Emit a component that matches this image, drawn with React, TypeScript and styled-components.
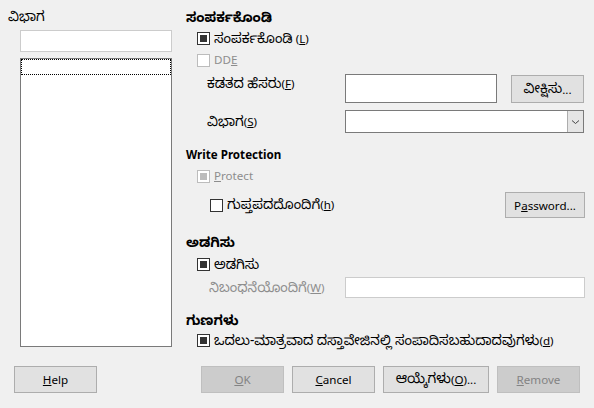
import React from "react";
import styled, { createGlobalStyle } from "styled-components";

const Global = createGlobalStyle`
  html, body { margin: 0; padding: 0; background: #f0f0f0; }
  body { font-family: "Noto Sans", "Noto Sans Kannada", "Open Sans", sans-serif; font-size: 11.6px; color: #000; }
`;

const Dialog = styled.div`
  width: 594px;
  height: 408px;
  background: #f0f0f0;
  display: flex;
  flex-direction: column;
  box-sizing: border-box;
  overflow: hidden;
`;

const Main = styled.div`
  display: flex;
  padding-left: 8px;
  height: 366px;
`;

const LeftCol = styled.div`
  width: 164px;
  display: flex;
  flex-direction: column;
  padding-top: 8px;
`;

const RightCol = styled.div`
  margin-left: 14px;
  width: 399px;
  display: flex;
  flex-direction: column;
`;

const Kn = styled.span`
  font-size: 13.5px;
`;

const Label = styled.div<{ $top?: number }>`
  height: 16px;
  line-height: 16px;
  white-space: nowrap;
  margin-top: ${(p) => p.$top ?? 0}px;
`;

const Header = styled(Label)`
  font-weight: bold;
`;

const Entry = styled.div<{ $w: number; $h: number; $dark?: boolean }>`
  width: ${(p) => p.$w}px;
  height: ${(p) => p.$h}px;
  box-sizing: border-box;
  background: #fff;
  border: 1px solid ${(p) => (p.$dark ? "#7a7a7a" : "#cccccc")};
`;

const SideEntry = styled(Entry)`
  margin-left: 12px;
  margin-top: 6px;
`;

const List = styled.div`
  margin-left: 12px;
  margin-top: 6px;
  width: 152px;
  height: 289px;
  box-sizing: border-box;
  background: #fff;
  border: 1px solid #7a7a7a;
`;

const ListFocus = styled.div`
  height: 16px;
  border: 1px dotted #000;
  box-sizing: border-box;
`;

const CheckRow = styled.div<{ $top: number; $indent?: number; $disabled?: boolean }>`
  display: flex;
  align-items: center;
  gap: 4px;
  height: 16px;
  line-height: 16px;
  margin-top: ${(p) => p.$top}px;
  margin-left: ${(p) => p.$indent ?? 11}px;
  white-space: nowrap;
  color: ${(p) => (p.$disabled ? "#8d8d8d" : "#000")};
`;

const Box = styled.span<{ $checked?: boolean; $disabled?: boolean }>`
  width: 13px;
  height: 13px;
  box-sizing: border-box;
  border: 1px solid ${(p) => (p.$disabled ? "#bcbcbc" : "#333")};
  background: #fff;
  display: flex;
  align-items: center;
  justify-content: center;
  flex: none;
  &::after {
    content: "";
    display: ${(p) => (p.$checked ? "block" : "none")};
    width: 7px;
    height: 7px;
    background: ${(p) => (p.$disabled ? "#bcbcbc" : "#333")};
  }
`;

const FieldGrid = styled.div`
  display: grid;
  grid-template-columns: 138px 166px 73px;
  grid-template-rows: 29px 23px;
  row-gap: 7px;
  margin-top: 6px;
  margin-left: 21px;
`;

const FieldLabel = styled.div<{ $disabled?: boolean }>`
  line-height: 16px;
  padding-top: 1px;
  white-space: nowrap;
  color: ${(p) => (p.$disabled ? "#8d8d8d" : "#000")};
`;

const CenterLabel = styled(FieldLabel)`
  padding-top: 0;
  align-self: center;
`;

const Button = styled.div<{ $w: number; $h?: number; $disabled?: boolean }>`
  width: ${(p) => p.$w}px;
  height: ${(p) => p.$h ?? 27}px;
  box-sizing: border-box;
  background: ${(p) => (p.$disabled ? "#cccccc" : "#e1e1e1")};
  border: 1px solid ${(p) => (p.$disabled ? "#bfbfbf" : "#adadad")};
  color: ${(p) => (p.$disabled ? "#838383" : "#000")};
  display: flex;
  align-items: center;
  justify-content: center;
  white-space: nowrap;
`;

const BrowseButton = styled(Button)`
  margin-top: 1px;
`;

const Combo = styled.div`
  grid-column: 2 / 4;
  width: 239px;
  height: 23px;
  box-sizing: border-box;
  background: #fff;
  border: 1px solid #7a7a7a;
  display: flex;
  justify-content: flex-end;
`;

const ComboButton = styled.div`
  width: 16px;
  height: 100%;
  box-sizing: border-box;
  border-left: 1px solid #adadad;
  background: #e5e5e5;
  display: flex;
  align-items: center;
  justify-content: center;
`;

const PasswordRow = styled.div`
  display: flex;
  align-items: center;
  justify-content: space-between;
  margin-top: 8px;
  margin-left: 24px;
  height: 26px;
`;

const CheckInline = styled.div`
  display: flex;
  align-items: center;
  gap: 4px;
  white-space: nowrap;
`;

const CondRow = styled.div`
  display: grid;
  grid-template-columns: 136px 240px;
  align-items: center;
  margin-top: 5px;
  margin-left: 23px;
  height: 20px;
`;

const Footer = styled.div`
  display: flex;
  align-items: flex-start;
  padding-left: 14px;
  height: 42px;
`;

const FooterGroup = styled.div`
  display: flex;
  gap: 8px;
  margin-left: 104px;
`;

const U = styled.span`
  text-decoration: underline;
`;

export default function App() {
  return (
    <Dialog>
      <Global />
      <Main>
        <LeftCol>
          <Label>
            <Kn>ವಿಭಾಗ</Kn>
          </Label>
          <SideEntry $w={152} $h={22} />
          <List>
            <ListFocus />
          </List>
        </LeftCol>
        <RightCol>
          <Header $top={9}>
            <Kn>ಸಂಪರ್ಕಕೊಂಡಿ</Kn>
          </Header>
          <CheckRow $top={5}>
            <Box $checked />
            <span>
              <Kn>ಸಂಪರ್ಕಕೊಂಡಿ</Kn> (<U>L</U>)
            </span>
          </CheckRow>
          <CheckRow $top={6} $disabled>
            <Box $disabled />
            <span>
              DD<U>E</U>
            </span>
          </CheckRow>
          <FieldGrid>
            <FieldLabel>
              <Kn>ಕಡತದ ಹೆಸರು</Kn>(<U>F</U>)
            </FieldLabel>
            <Entry $w={152} $h={29} $dark />
            <BrowseButton $w={73} $h={28}>
              <Kn>ವೀಕ್ಷಿಸು</Kn>...
            </BrowseButton>
            <CenterLabel>
              <Kn>ವಿಭಾಗ</Kn>(<U>S</U>)
            </CenterLabel>
            <Combo>
              <ComboButton>
                <svg width="9" height="6" viewBox="0 0 9 6">
                  <path d="M1 1.5 L4.5 4.5 L8 1.5" fill="none" stroke="#444" strokeWidth="1" />
                </svg>
              </ComboButton>
            </Combo>
          </FieldGrid>
          <Header $top={14}>Write Protection</Header>
          <CheckRow $top={5} $disabled>
            <Box $checked $disabled />
            <span>
              <U>P</U>rotect
            </span>
          </CheckRow>
          <PasswordRow>
            <CheckInline>
              <Box />
              <span>
                <Kn>ಗುಪ್ತಪದದೊಂದಿಗೆ</Kn>(<U>h</U>)
              </span>
            </CheckInline>
            <Button $w={80} $h={26}>
              P<U>a</U>ssword...
            </Button>
          </PasswordRow>
          <Header $top={16}>
            <Kn>ಅಡಗಿಸು</Kn>
          </Header>
          <CheckRow $top={6}>
            <Box $checked />
            <Kn>ಅಡಗಿಸು</Kn>
          </CheckRow>
          <CondRow>
            <CenterLabel $disabled>
              <Kn>ನಿಬಂಧನೆಯೊಂದಿಗೆ</Kn>(<U>W</U>)
            </CenterLabel>
            <Entry $w={240} $h={21} />
          </CondRow>
          <Header $top={15}>
            <Kn>ಗುಣಗಳು</Kn>
          </Header>
          <CheckRow $top={4}>
            <Box $checked />
            <span>
              <Kn>ಒದಲು-ಮಾತ್ರವಾದ ದಸ್ತಾವೇಜಿನಲ್ಲಿ ಸಂಪಾದಿಸಬಹುದಾದವುಗಳು</Kn>(<U>d</U>)
            </span>
          </CheckRow>
        </RightCol>
      </Main>
      <Footer>
        <Button $w={83}>
          <U>H</U>elp
        </Button>
        <FooterGroup>
          <Button $w={83} $disabled>
            <U>O</U>K
          </Button>
          <Button $w={83}>
            <U>C</U>ancel
          </Button>
          <Button $w={106}>
            <Kn>ಆಯ್ಕೆಗಳು</Kn> (<U>O</U>)...
          </Button>
          <Button $w={83} $disabled>
            <U>R</U>emove
          </Button>
        </FooterGroup>
      </Footer>
    </Dialog>
  );
}
